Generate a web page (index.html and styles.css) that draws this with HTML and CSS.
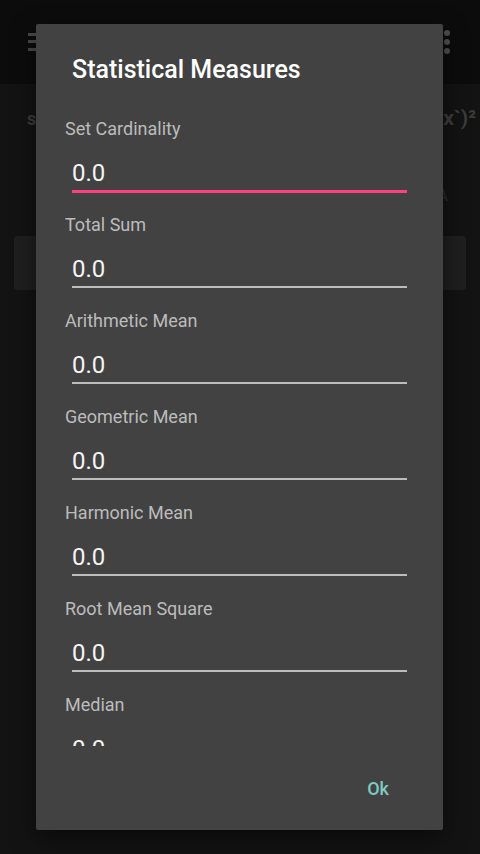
FILE: index.html
```html
<!DOCTYPE html>
<html lang="en">
<head>
<meta charset="utf-8">
<title>Statistical Measures</title>
<link rel="stylesheet" href="styles.css">
</head>
<body>
<div class="app">
  <header class="topbar">
    <div class="hamburger"><span></span><span></span><span></span></div>
    <div class="kebab"><span></span><span></span><span></span></div>
  </header>
  <main class="content">
    <div class="formula-row">
      <span class="formula-left">s</span>
      <span class="formula-right">x`)²</span>
    </div>
    <div class="tab-row"><span class="tab-label">A</span></div>
    <div class="card"></div>
  </main>
</div>

<div class="dialog">
  <h1 class="dialog-title">Statistical Measures</h1>
  <div class="dialog-body">
    <div class="field">
      <div class="label">Set Cardinality</div>
      <div class="value focused">0.0</div>
    </div>
    <div class="field">
      <div class="label">Total Sum</div>
      <div class="value">0.0</div>
    </div>
    <div class="field">
      <div class="label">Arithmetic Mean</div>
      <div class="value">0.0</div>
    </div>
    <div class="field">
      <div class="label">Geometric Mean</div>
      <div class="value">0.0</div>
    </div>
    <div class="field">
      <div class="label">Harmonic Mean</div>
      <div class="value">0.0</div>
    </div>
    <div class="field">
      <div class="label">Root Mean Square</div>
      <div class="value">0.0</div>
    </div>
    <div class="field">
      <div class="label">Median</div>
      <div class="value">0.0</div>
    </div>
  </div>
  <div class="dialog-actions">
    <span class="btn-ok">Ok</span>
  </div>
</div>
</body>
</html>
```

FILE: styles.css
```css
* { box-sizing: border-box; }
html, body {
  margin: 0;
  padding: 0;
  width: 480px;
  height: 854px;
  overflow: hidden;
  background: #121212;
  font-family: Roboto, "Noto Sans", "Liberation Sans", sans-serif;
}

.app {
  width: 480px;
  height: 854px;
  display: flex;
  flex-direction: column;
}

.topbar {
  height: 84px;
  background: #0c0c0c;
  display: flex;
  align-items: center;
  justify-content: space-between;
  padding: 0 30px 0 28px;
}

.hamburger {
  width: 18px;
  height: 18px;
  display: flex;
  flex-direction: column;
  justify-content: space-between;
  margin-top: -1px;
}
.hamburger span {
  display: block;
  height: 3px;
  background: #4a4a4a;
}

.kebab {
  display: flex;
  flex-direction: column;
  gap: 3px;
}
.kebab span {
  display: block;
  width: 6px;
  height: 6px;
  border-radius: 50%;
  background: #4f4f4f;
}

.content {
  flex: 1;
  background: #131313;
  padding: 0 14px;
}

.formula-row {
  display: flex;
  justify-content: space-between;
  align-items: baseline;
  margin-right: -10px;
  padding: 22px 0 0 13px;
  font-weight: 700;
  font-size: 18px;
  line-height: 24px;
  color: #3c3c3c;
}
.formula-right { font-size: 21px; }

.tab-row {
  display: flex;
  justify-content: flex-end;
  padding: 55px 18px 0 0;
  font-size: 16px;
  line-height: 20px;
  color: #2c2c2c;
}

.card {
  margin-top: 30px;
  height: 54px;
  background: #1f1f1f;
  border-radius: 3px;
}

.dialog {
  position: absolute;
  left: 36px;
  top: 24px;
  width: 407px;
  height: 806px;
  background: #424242;
  border-radius: 2px;
  box-shadow: 0 8px 24px rgba(0,0,0,0.5);
  display: flex;
  flex-direction: column;
}

.dialog-title {
  margin: 0;
  padding: 30px 0 0 36px;
  height: 61px;
  font-size: 25px;
  line-height: 31px;
  font-weight: 500;
  color: #ffffff;
}

.dialog-body {
  height: 661px;
  overflow: hidden;
  padding-top: 32px;
}

.field {
  margin-bottom: 21px;
}

.label {
  margin-left: 29px;
  margin-bottom: 16px;
  font-size: 18px;
  line-height: 24px;
  color: #bcbcbc;
}

.value {
  margin: 0 36px;
  height: 35px;
  padding-bottom: 1px;
  font-size: 24px;
  line-height: 32px;
  color: #f4f4f4;
  border-bottom: 2px solid #bdbdbd;
}
.value.focused {
  height: 36px;
  border-bottom: 3px solid #ff4081;
  margin-bottom: -1px;
}

.dialog-actions {
  flex: 1;
  display: flex;
  justify-content: flex-end;
  align-items: flex-start;
  padding: 31px 54px 0 0;
}

.btn-ok {
  font-size: 18px;
  line-height: 24px;
  font-weight: 500;
  color: #80cbc4;
}
```
